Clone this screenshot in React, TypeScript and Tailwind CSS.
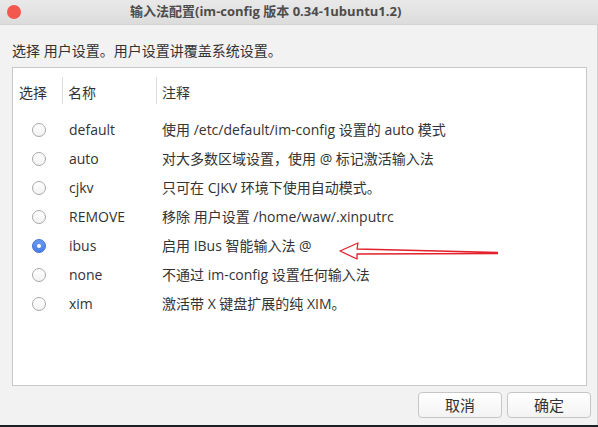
import React from "react";

type Row = {
  name: string;
  note: string;
  checked?: boolean;
};

const rows: Row[] = [
  { name: "default", note: "使用 /etc/default/im-config 设置的 auto 模式" },
  { name: "auto", note: "对大多数区域设置，使用 @ 标记激活输入法" },
  { name: "cjkv", note: "只可在 CJKV 环境下使用自动模式。" },
  { name: "REMOVE", note: "移除 用户设置 /home/waw/.xinputrc" },
  { name: "ibus", note: "启用 IBus 智能输入法 @", checked: true },
  { name: "none", note: "不通过 im-config 设置任何输入法" },
  { name: "xim", note: "激活带 X 键盘扩展的纯 XIM。" },
];

const font = { fontFamily: '"Open Sans", "Noto Sans CJK SC", sans-serif' };

function Radio({ checked }: { checked?: boolean }) {
  if (checked) {
    return (
      <span className="flex h-[14px] w-[14px] items-center justify-center rounded-full border border-[#3f6fd6] bg-gradient-to-b from-[#6d9bf1] to-[#4a7de6]">
        <span className="h-[4px] w-[4px] rounded-full bg-white" />
      </span>
    );
  }
  return (
    <span className="h-[14px] w-[14px] rounded-full border border-[#a9a9a9] bg-gradient-to-b from-white to-[#f2f2f2]" />
  );
}

function Button({ label }: { label: string }) {
  return (
    <button className="flex h-[26px] w-[84px] items-center justify-center rounded-[4px] border border-[#c6c6c6] bg-gradient-to-b from-white to-[#f3f3f3] text-[15px] text-[#333]">
      {label}
    </button>
  );
}

export default function App() {
  return (
    <div
      className="relative flex h-[427px] w-[598px] flex-col overflow-hidden bg-[#f2f2f2] text-[14px] text-[#333]"
      style={font}
    >
      <div className="flex h-[25px] shrink-0 items-center border-b border-[#d4d4d4] bg-gradient-to-b from-[#e9e9e9] to-[#dcdcdc] pl-[7px]">
        <span className="h-[14px] w-[14px] rounded-full bg-[#f4574d]" />
        <span className="ml-[109px] text-[13px] font-bold text-[#4c4c4c]">
          输入法配置(im-config 版本 0.34-1ubuntu1.2)
        </span>
      </div>

      <div className="flex flex-1 flex-col border-r border-[#cfcfcf] pl-[12px] pr-[10px]">
        <div className="mt-[16px] h-[20px] leading-[20px]">
          选择 用户设置。用户设置讲覆盖系统设置。
        </div>

        <div className="mt-[6px] h-[319px] border border-[#c8c8c8] bg-white">
          <div className="mt-[9px] flex h-[30px] items-start">
            <div className="flex h-[27px] w-[50px] items-center border-r border-[#dcdcdc] pl-[6px] pt-[3px]">
              选择
            </div>
            <div className="flex h-[27px] w-[94px] items-center border-r border-[#dcdcdc] pl-[5px] pt-[3px]">
              名称
            </div>
            <div className="flex h-[27px] items-center pl-[5px] pt-[3px]">注释</div>
          </div>

          <div className="mt-[8px] flex flex-col">
            {rows.map((r) => (
              <div key={r.name} className="flex h-[29px] items-center">
                <div className="flex w-[51px] justify-center pl-[1px]">
                  <Radio checked={r.checked} />
                </div>
                <div className="w-[94px] pl-[5px]">{r.name}</div>
                <div className="pl-[4px]">{r.note}</div>
              </div>
            ))}
          </div>
        </div>

        <div className="-mr-[4px] mt-[6px] flex justify-end gap-[5px]">
          <Button label="取消" />
          <Button label="确定" />
        </div>
      </div>

      <div className="h-[2px] shrink-0 bg-[#1b2126]" />

      <svg
        className="absolute left-[330px] top-[236px]"
        width="180"
        height="30"
        viewBox="0 0 180 30"
      >
        <path
          d="M168 16.5 L27 13 L28 7 L10 15 L27 23 L27 18 L168 17.5"
          fill="none"
          stroke="#e3202c"
          strokeWidth="1.3"
          strokeLinejoin="round"
        />
      </svg>
    </div>
  );
}
